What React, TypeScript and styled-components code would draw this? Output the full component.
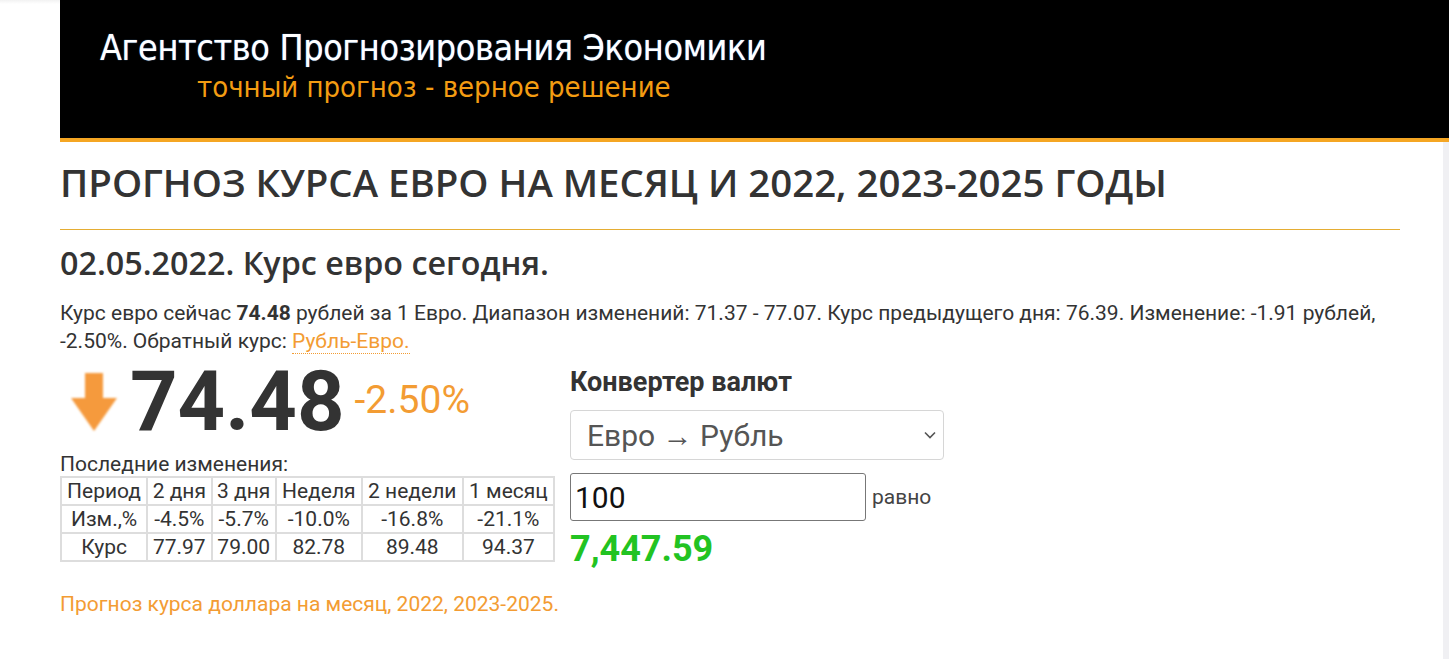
import React from "react";
import styled, { createGlobalStyle } from "styled-components";

const GlobalStyle = createGlobalStyle`
  html, body {
    margin: 0;
    padding: 0;
    background: #fff;
  }
  body {
    font-family: Roboto, "Liberation Sans", sans-serif;
    color: #333;
  }
`;

const periods = ["2 дня", "3 дня", "Неделя", "2 недели", "1 месяц"];
const changes = ["-4.5%", "-5.7%", "-10.0%", "-16.8%", "-21.1%"];
const rates = ["77.97", "79.00", "82.78", "89.48", "94.37"];

const DownArrow = () => (
  <svg width="50" height="64" viewBox="0 0 50 64">
    <defs>
      <filter id="soft" x="-10%" y="-10%" width="120%" height="120%">
        <feGaussianBlur stdDeviation="0.8" />
      </filter>
    </defs>
    <path
      d="M15 3 H33 V28 H47 L24 61 L1 28 H15 Z"
      fill="#f59a3c"
      filter="url(#soft)"
    />
  </svg>
);

export default function App() {
  return (
    <Page>
      <GlobalStyle />
      <Main>
        <Header>
          <Brand>Агентство Прогнозирования Экономики</Brand>
          <Slogan>точный прогноз - верное решение</Slogan>
        </Header>
        <Content>
          <Title>ПРОГНОЗ КУРСА ЕВРО НА МЕСЯЦ И 2022, 2023-2025 ГОДЫ</Title>
          <Divider />
          <Subtitle>02.05.2022. Курс евро сегодня.</Subtitle>
          <Lead>
            Курс евро сейчас <b>74.48</b> рублей за 1 Евро. Диапазон изменений:
            71.37 - 77.07. Курс предыдущего дня: 76.39. Изменение: -1.91 рублей,
            -2.50%. Обратный курс: <DottedLink href="#">Рубль-Евро.</DottedLink>
          </Lead>
          <Columns>
            <RateColumn>
              <BigRate>
                <DownArrow />
                <RateValue>74.48</RateValue>
                <RateChange>-2.50%</RateChange>
              </BigRate>
              <Caption>Последние изменения:</Caption>
              <ChangesTable>
                <tbody>
                  <tr>
                    <Cell>Период</Cell>
                    {periods.map((p) => (
                      <Cell key={p}>{p}</Cell>
                    ))}
                  </tr>
                  <tr>
                    <Cell>Изм.,%</Cell>
                    {changes.map((c) => (
                      <Cell key={c}>{c}</Cell>
                    ))}
                  </tr>
                  <tr>
                    <Cell>Курс</Cell>
                    {rates.map((r) => (
                      <Cell key={r}>{r}</Cell>
                    ))}
                  </tr>
                </tbody>
              </ChangesTable>
            </RateColumn>
            <Converter>
              <ConverterTitle>Конвертер валют</ConverterTitle>
              <SelectBox>
                <span>Евро → Рубль</span>
                <svg width="14" height="10" viewBox="0 0 14 10">
                  <path
                    d="M2 2.5 L7 7.5 L12 2.5"
                    fill="none"
                    stroke="#555"
                    strokeWidth="1.6"
                  />
                </svg>
              </SelectBox>
              <AmountRow>
                <AmountInput defaultValue="100" />
                <Equals>равно</Equals>
              </AmountRow>
              <Result>7,447.59</Result>
            </Converter>
          </Columns>
          <FooterLink href="#">
            Прогноз курса доллара на месяц, 2022, 2023-2025.
          </FooterLink>
        </Content>
      </Main>
      <SideStrip />
    </Page>
  );
}

const Page = styled.div`
  display: flex;
  min-height: 659px;
  padding-left: 60px;
  box-sizing: border-box;
  background: linear-gradient(#f2f2f2, #fff 4px);
`;

const Main = styled.div`
  flex: 1;
  display: flex;
  flex-direction: column;
`;

const SideStrip = styled.div`
  width: 6px;
  margin-top: 142px;
  background: #f0f0f3;
`;

const Header = styled.header`
  background: #000;
  border-bottom: 4px solid #f5a623;
  margin-right: -6px;
  display: flex;
  flex-direction: column;
  padding: 26px 0 0 40px;
  height: 112px;
  font-family: "DejaVu Sans Condensed", "DejaVu Sans", sans-serif;
`;

const Brand = styled.div`
  color: #fff;
  font-size: 35.5px;
  line-height: 44px;
  letter-spacing: -0.3px;
  text-shadow: 0 0 1px #6ab0ff;
`;

const Slogan = styled.div`
  color: #f39c12;
  font-size: 29px;
  line-height: 34px;
  padding-left: 97px;
`;

const Content = styled.div`
  width: 1340px;
  display: flex;
  flex-direction: column;
`;

const Title = styled.h1`
  margin: 15px 0 0;
  font-family: "Open Sans", sans-serif;
  font-weight: 600;
  font-size: 38.4px;
  line-height: 50px;
  color: #333;
`;

const Divider = styled.div`
  margin-top: 22px;
  height: 1px;
  background: #e5ad33;
`;

const Subtitle = styled.h2`
  margin: 10px 0 0;
  font-family: "Open Sans", sans-serif;
  font-weight: 600;
  font-size: 32.3px;
  line-height: 44px;
  color: #333;
`;

const Lead = styled.p`
  margin: 15px 0 0;
  font-size: 21px;
  line-height: 28px;
  color: #333;
  padding-right: 20px;

  b {
    font-weight: 700;
  }
`;

const DottedLink = styled.a`
  color: #f39c33;
  text-decoration: none;
  border-bottom: 1px dotted #f39c33;
`;

const Columns = styled.div`
  display: flex;
  margin-top: 7px;
`;

const RateColumn = styled.div`
  width: 510px;
  display: flex;
  flex-direction: column;
`;

const BigRate = styled.div`
  display: flex;
  align-items: center;
  gap: 10px;
  padding-left: 10px;
  height: 80px;
`;

const RateValue = styled.span`
  font-weight: 700;
  font-size: 83px;
  line-height: 80px;
  color: #333;
`;

const RateChange = styled.span`
  font-size: 39px;
  color: #f39c33;
  margin-top: -4px;
`;

const Caption = styled.div`
  margin-top: 10px;
  font-size: 21px;
  line-height: 24px;
  color: #333;
`;

const ChangesTable = styled.table`
  border-collapse: collapse;
  border: 2px solid #ddd;
  width: 495px;
`;

const Cell = styled.td`
  border: 2px solid #ddd;
  padding: 0 3px;
  height: 26px;
  line-height: 25px;
  font-size: 21px;
  text-align: center;
  color: #333;
  white-space: nowrap;
`;

const Converter = styled.div`
  display: flex;
  flex-direction: column;
  padding-top: 4px;
`;

const ConverterTitle = styled.div`
  font-weight: 700;
  font-size: 27px;
  line-height: 32px;
  color: #333;
`;

const SelectBox = styled.div`
  margin-top: 12px;
  width: 374px;
  height: 50px;
  box-sizing: border-box;
  border: 1px solid #d6d6d6;
  border-radius: 4px;
  display: flex;
  align-items: center;
  justify-content: space-between;
  padding: 0 6px 0 16px;
  font-size: 30px;
  color: #555;
`;

const AmountRow = styled.div`
  display: flex;
  align-items: center;
  gap: 6px;
  margin-top: 13px;
`;

const AmountInput = styled.input`
  width: 296px;
  height: 48px;
  box-sizing: border-box;
  border: 1px solid #777;
  border-radius: 3px;
  padding: 0 4px;
  font-family: Roboto, sans-serif;
  font-size: 30px;
  color: #111;
  outline: none;
`;

const Equals = styled.span`
  font-size: 21px;
  color: #444;
`;

const Result = styled.div`
  margin-top: 8px;
  font-weight: 700;
  font-size: 36px;
  line-height: 40px;
  color: #22c322;
`;

const FooterLink = styled.a`
  margin-top: 23px;
  font-size: 21px;
  line-height: 25px;
  color: #f39c33;
  text-decoration: none;
  align-self: flex-start;
`;
